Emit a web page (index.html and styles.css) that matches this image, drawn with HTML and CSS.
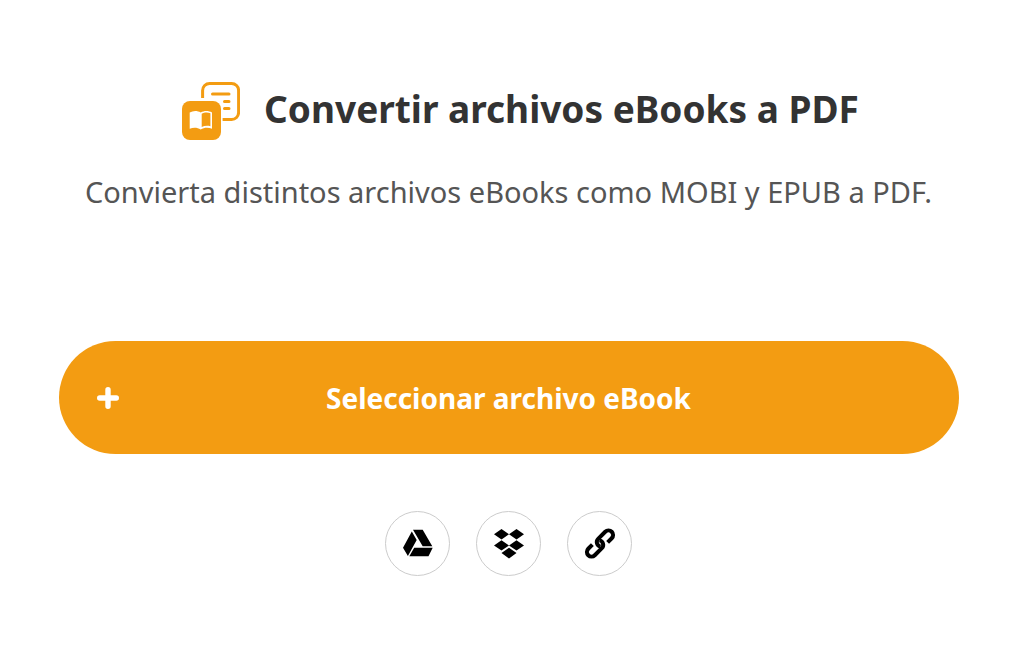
FILE: index.html
```html
<!DOCTYPE html>
<html lang="es">
<head>
  <meta charset="UTF-8">
  <meta name="viewport" content="width=device-width, initial-scale=1">
  <title>Convertir archivos eBooks a PDF</title>
  <link rel="stylesheet" href="styles.css">
</head>
<body>
  <main class="converter">
    <header class="intro">
      <div class="heading">
        <svg class="heading-icon" viewBox="0 0 58 58" aria-hidden="true">
          <path d="M20.6 16V8.5a7 7 0 0 1 7-7h22a7 7 0 0 1 7 7v22a7 7 0 0 1-7 7h-9" fill="none" stroke="#f39c12" stroke-width="3"/>
          <path d="M30.5 12h16.500M42.500 19.400h4.500M42.500 26.600h4.500" fill="none" stroke="#f39c12" stroke-width="3" stroke-linecap="round"/>
          <rect y="19" width="39" height="39" rx="8" fill="#f39c12"/>
          <path d="M7.700 30.500c3.500-2 7.600-2 11 0 3.500-2 7.800-2 11.300 0v16.300c-3.500-1.600-7.800-1.600-11.300.8-3.400-2.400-7.500-2.400-11-.8z" fill="#fff"/>
          <path d="M19.700 31.800c2.600-1.600 5.800-1.900 8.700-.5v12.900c-3-.8-6.100-.5-8.700.9z" fill="#f39c12"/>
        </svg>
        <h1>Convertir archivos eBooks a PDF</h1>
      </div>
      <p>Convierta distintos archivos eBooks como MOBI y EPUB a PDF.</p>
    </header>

    <button type="button" class="select-file">
      <svg class="plus" viewBox="0 0 22 22" aria-hidden="true">
        <path d="M11 2.700v16.600M2.700 11h16.600" fill="none" stroke="#fff" stroke-width="5.400" stroke-linecap="round"/>
      </svg>
      <span>Seleccionar archivo eBook</span>
    </button>

    <div class="sources">
      <button type="button" class="source" aria-label="Google Drive">
        <svg viewBox="0 0 30 30" aria-hidden="true">
          <path d="M10 .7h9.700l9.600 16.500h-9.600zM8.800 2.500l4.900 8.400L4.900 26.900 0 18.700zM11.200 18.800h18.500L25.500 27.300H6.300z"/>
        </svg>
      </button>
      <button type="button" class="source" aria-label="Dropbox">
        <svg viewBox="0 0 30 30" aria-hidden="true">
          <path d="M7.500 0 15 5.200 7.500 10.400 0 5.200zM22.500 0 30 5.200 22.500 10.400 15 5.200zM7.500 11.200 15 16.400 7.500 21.600 0 16.400zM22.500 11.200 30 16.400 22.500 21.600 15 16.400zM15 18.800l7.500 5.200L15 29.400 7.500 24z"/>
        </svg>
      </button>
      <button type="button" class="source" aria-label="Enlace">
        <svg viewBox="0 0 30 30" aria-hidden="true">
          <g class="link" transform="translate(15 14.500) rotate(-45)">
            <path d="M6.200 4.600H12a4.600 4.600 0 0 0 0-9.200H2a4.600 4.600 0 0 0-3.800 7.200"/>
            <path d="M-6.200-4.600H-12a4.600 4.600 0 0 0 0 9.200H-2a4.600 4.600 0 0 0 3.800-7.200"/>
          </g>
        </svg>
      </button>
    </div>
  </main>
</body>
</html>
```
FILE: styles.css
```css
* {
  box-sizing: border-box;
}
body {
  margin: 0;
  background: #fff;
  color: #333;
  font-family: "Noto Sans", sans-serif;
}
.converter {
  display: flex;
  flex-direction: column;
  align-items: center;
  padding: 82px 24px 70px;
}
.intro {
  text-align: center;
}
.heading {
  display: flex;
  justify-content: center;
  align-items: flex-start;
  gap: 24px;
  padding-left: 24px;
}
.heading-icon {
  flex: none;
  width: 58px;
  height: 58px;
}
h1 {
  margin: 0;
  font-size: 37px;
  line-height: 54px;
  font-weight: 700;
}
.intro p {
  margin: 32px 0 0;
  color: #555;
  font-size: 29px;
  line-height: 40px;
}
.select-file {
  display: flex;
  align-items: center;
  width: 100%;
  max-width: 900px;
  min-height: 113px;
  margin-top: 129px;
  padding: 0 38px;
  border: none;
  border-radius: 57px;
  background: #f39c12;
  color: #fff;
  font-family: inherit;
  font-size: 28px;
  font-weight: 700;
  cursor: pointer;
}
.select-file span {
  flex: 1;
  padding-right: 22px;
}
.plus {
  flex: none;
  width: 22px;
  height: 22px;
}
.sources {
  display: flex;
  gap: 26px;
  margin-top: 57px;
}
.source {
  display: flex;
  justify-content: center;
  align-items: center;
  width: 65px;
  height: 65px;
  padding: 0;
  border: 1px solid #ccc;
  border-radius: 50%;
  background: #fff;
  color: #000;
  cursor: pointer;
}
.source svg {
  width: 30px;
  height: 30px;
  fill: currentColor;
  overflow: visible;
}
.source .link {
  fill: none;
  stroke: currentColor;
  stroke-width: 4;
}
.select-file:hover {
  background: #e08e0b;
}
.source:hover {
  border-color: #999;
}
@media (max-width: 700px) {
  .heading {
    align-items: center;
    padding-left: 0;
  }
  h1 {
    font-size: 28px;
    line-height: 36px;
  }
  .intro p {
    font-size: 20px;
    line-height: 28px;
  }
  .select-file {
    min-height: 80px;
    margin-top: 60px;
    font-size: 20px;
  }
}
```
